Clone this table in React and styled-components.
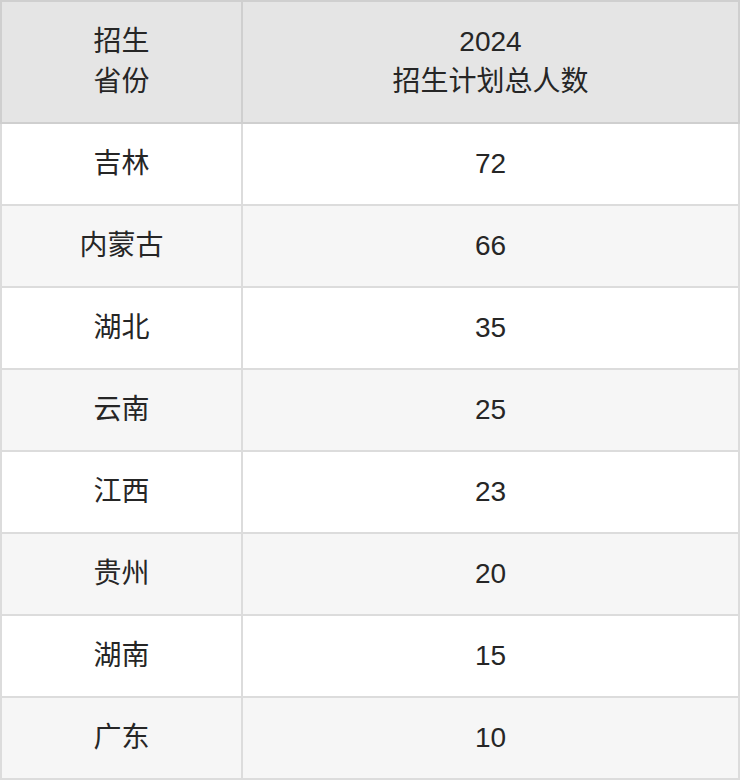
import React from "react";
import styled, { createGlobalStyle } from "styled-components";

const Global = createGlobalStyle`
  html, body { margin: 0; padding: 0; background: #fff; }
  body { font-family: "Liberation Sans", "Noto Sans CJK SC", sans-serif; }
`;

const Table = styled.table`
  width: 740px;
  border-collapse: separate;
  border-spacing: 0;
  table-layout: fixed;
  font-family: "Liberation Sans", "Noto Sans CJK SC", sans-serif;
  font-size: 28px;
  color: #262626;
`;

const HeadCell = styled.th`
  height: 120px;
  padding: 0;
  background: #e5e5e5;
  font-weight: normal;
  line-height: 40px;
  text-align: center;
  vertical-align: middle;
  border-top: 2px solid #cfcfcf;
  border-bottom: 2px solid #cfcfcf;
  border-right: 2px solid #cfcfcf;
  border-left: ${(p) => (p.$first ? "2px solid #cfcfcf" : "none")};
  width: ${(p) => (p.$first ? "239px" : "auto")};
`;

const Row = styled.tr`
  background: ${(p) => (p.$alt ? "#f6f6f6" : "#ffffff")};
`;

const Cell = styled.td`
  height: 80px;
  padding: 0;
  text-align: center;
  vertical-align: middle;
  line-height: 40px;
  border-bottom: 2px solid #dcdcdc;
  border-right: 2px solid #dcdcdc;
  border-left: ${(p) => (p.$first ? "2px solid #dcdcdc" : "none")};
`;

const rows = [
  ["吉林", "72"],
  ["内蒙古", "66"],
  ["湖北", "35"],
  ["云南", "25"],
  ["江西", "23"],
  ["贵州", "20"],
  ["湖南", "15"],
  ["广东", "10"],
];

export default function App() {
  return (
    <>
      <Global />
      <Table>
        <thead>
          <tr>
            <HeadCell $first>
              招生
              <br />
              省份
            </HeadCell>
            <HeadCell>
              2024
              <br />
              招生计划总人数
            </HeadCell>
          </tr>
        </thead>
        <tbody>
          {rows.map(([p, n], i) => (
            <Row key={p} $alt={i % 2 === 1}>
              <Cell $first>{p}</Cell>
              <Cell>{n}</Cell>
            </Row>
          ))}
        </tbody>
      </Table>
    </>
  );
}
